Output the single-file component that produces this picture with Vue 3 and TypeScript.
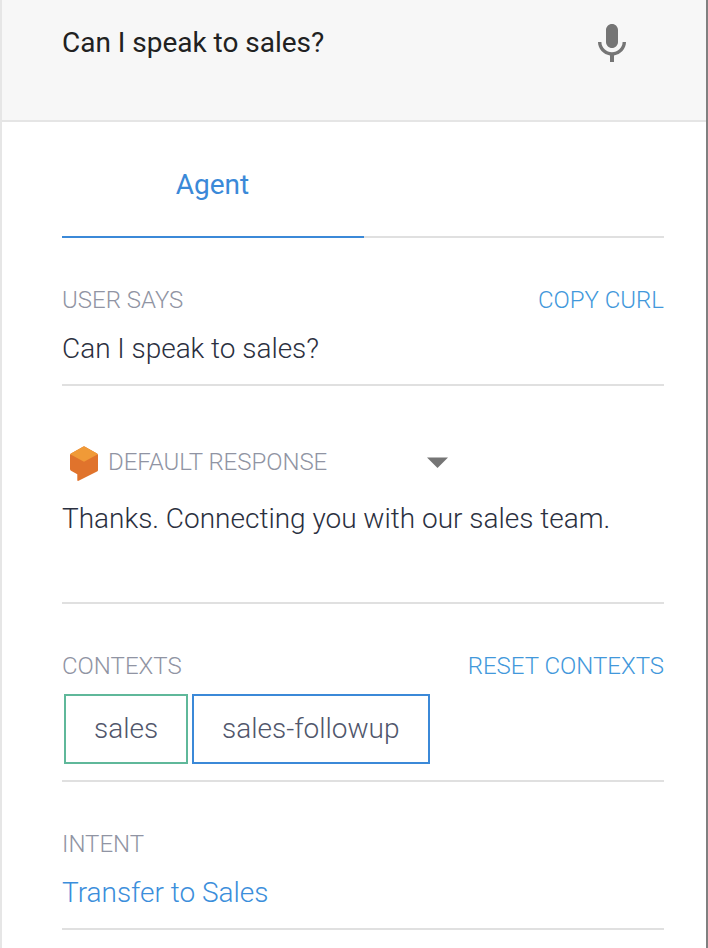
<script setup lang="ts">
interface Context { name: string; kind: string }
const contexts: Context[] = [
  { name: 'sales', kind: 'green' },
  { name: 'sales-followup', kind: 'blue' },
]
</script>

<template>
  <main class="panel">
    <header class="query">
      <span class="query-text">Can I speak to sales?</span>
      <svg class="mic" viewBox="5 2 14 19" width="28" height="38">
        <path d="M12 14c1.66 0 3-1.34 3-3V5c0-1.66-1.34-3-3-3S9 3.34 9 5v6c0 1.66 1.34 3 3 3zm5.3-3c0 3-2.54 5.1-5.3 5.1S6.7 14 6.7 11H5c0 3.41 2.72 6.23 6 6.72V21h2v-3.28c3.28-.48 6-3.3 6-6.72h-1.7z" fill="#757575" />
      </svg>
    </header>
    <div class="content">
      <nav class="tabs"><span class="tab">Agent</span></nav>
      <section class="says">
        <div class="row"><h2>USER SAYS</h2><a>COPY CURL</a></div>
        <p class="tight">Can I speak to sales?</p>
      </section>
      <section class="response">
        <div class="row start">
          <svg class="logo" viewBox="0 0 30 36" width="30" height="36">
            <path d="M15 1.3Q15.4 1.3 16 1.7L28 8.4Q29 9 29 10V25Q29 26 28 26.6L9.6 35.8Q8.3 36.3 8.3 35V29.2L2 25.7Q1 25 1 24V10Q1 9 2 8.4L14 1.7Q14.6 1.3 15 1.3Z" fill="#e0732c" />
            <path d="M14 1.7Q15 1.1 16 1.7L28 8.4Q28.6 8.8 28.8 9.2L15 16.8 1.2 9.2Q1.4 8.8 2 8.4Z" fill="#f09a37" />
          </svg>
          <h2>DEFAULT RESPONSE</h2>
          <svg class="caret" viewBox="0 0 21 11" width="21" height="11"><path d="M0 .4h21L10.5 11Z" fill="#757575" /></svg>
        </div>
        <p>Thanks. Connecting you with our sales team.</p>
      </section>
      <section class="contexts">
        <div class="row"><h2>CONTEXTS</h2><a>RESET CONTEXTS</a></div>
        <div class="chips"><span v-for="c in contexts" :key="c.name" class="chip" :class="c.kind">{{ c.name }}</span></div>
      </section>
      <section class="intent">
        <div class="row"><h2>INTENT</h2></div>
        <p><a class="link">Transfer to Sales</a></p>
      </section>
    </div>
  </main>
</template>

<style>
body { margin: 0; background: #fff; }
</style>
<style scoped>
.panel { box-sizing: border-box; width: 708px; height: 948px; overflow: hidden; border-left: 2px solid #e6e6e6; border-right: 2px solid #808080; font-family: Roboto, sans-serif; color: #212121; background: #fff; }
.query { box-sizing: border-box; height: 122px; border-bottom: 2px solid #e5e5e5; background: #f7f7f7; display: flex; justify-content: space-between; align-items: flex-start; padding: 24px 80px 0 60px; }
.query-text { font-size: 28px; line-height: 36px; padding-top: 1px; letter-spacing: -0.02px; }
.content { padding: 0 42px 0 60px; }
.tabs { box-sizing: border-box; height: 116px; border-bottom: 2px solid #e0e0e0; display: flex; }
.tab { box-sizing: border-box; width: 302px; height: 116px; border-bottom: 2px solid #3b89d8; color: #3b89d8; text-align: center; font-size: 28px; line-height: 36px; padding: 45px 1px 0 0; }
section { box-sizing: border-box; border-bottom: 2px solid #e0e0e0; }
.row { display: flex; justify-content: space-between; align-items: center; height: 30px; font-size: 24px; line-height: 30px; font-weight: 300; }
.row.start { justify-content: flex-start; }
h2 { margin: 0; font-size: 24px; font-weight: 300; color: #9094a3; }
a { color: #4298db; }
p { margin: 0; font-size: 28px; line-height: 36px; font-weight: 300; color: #2b3040; }
.link { color: #3b8edb; letter-spacing: -0.02px; }
.says { height: 148px; padding-top: 47px; }
.says p { margin-top: 16px; }
.tight { letter-spacing: -0.03px; }
.response { height: 218px; padding-top: 61px; }
.response p { margin-top: 24px; letter-spacing: -0.01px; }
.logo { margin: 2px 9px 0 7px; }
.response h2 { letter-spacing: -0.03px; }
.caret { margin: 1px 0 0 100px; }
.contexts { height: 178px; padding-top: 47px; }
.chips { display: flex; gap: 4px; padding: 13px 2px 0; }
.chip { box-sizing: border-box; height: 70px; border: 2px solid; padding: 0 28px; font-size: 28px; line-height: 66px; font-weight: 300; color: #50566b; }
.green { width: 124px; border-color: #5fb89a; }
.blue { width: 238px; border-color: #3b89d8; }
.intent { height: 148px; padding-top: 47px; }
.intent p { margin-top: 16px; }
</style>
